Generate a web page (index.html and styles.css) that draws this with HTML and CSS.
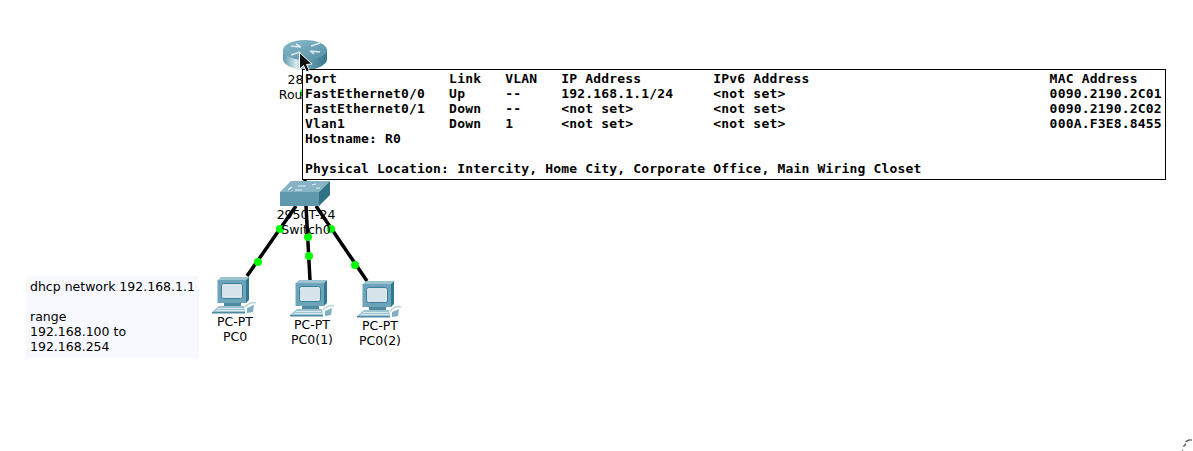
FILE: index.html
```html
<!DOCTYPE html>
<html lang="en">
<head>
<meta charset="utf-8">
<title>Packet Tracer topology</title>
<link rel="stylesheet" href="styles.css">
</head>
<body>
<main class="canvas">
  <svg class="layer" width="1193" height="451" viewBox="0 0 1193 451">
    <defs>
      <linearGradient id="rside" x1="0" x2="1" y1="0" y2="0">
        <stop offset="0" stop-color="#5a99ae"/><stop offset="0.3" stop-color="#d9e9ee"/><stop offset="0.55" stop-color="#6aa0b4"/><stop offset="1" stop-color="#35778f"/>
      </linearGradient>
      <linearGradient id="rtop" x1="0" x2="1" y1="0" y2="1">
        <stop offset="0" stop-color="#8abaca"/><stop offset="1" stop-color="#558fa6"/>
      </linearGradient>
      <g id="pc">
        <path d="M1 3 L4 0 H32 L29 3 Z" fill="#9cc3d0"/>
        <rect x="0.500" y="3" width="28.500" height="23" fill="#6ca5b9"/>
        <path d="M29 3 L32 0 V23 L29 26 Z" fill="#2f7a92"/>
        <rect x="4.500" y="6.500" width="21" height="15" rx="2" fill="#d6e5ec" stroke="#3f7f96"/>
        <path d="M7 26 H24 V29 H7 Z" fill="#4f8aa0"/>
        <path d="M-5 35 L2 29 H27 L28 35 Z" fill="#9cc3d0"/>
        <path d="M-5 35 H28 V36.500 H-5 Z" fill="#4f8aa0"/>
        <path d="M1 31.500 H26 M-1 33.500 H27" stroke="#dbe9ee" fill="none"/>
        <path d="M28 30 C31 26 36 25 39 26" stroke="#b4d1db" stroke-width="1.500" fill="none"/>
        <path d="M30 31 L37 28 L36 35 L30 36 Z" fill="#7fb0c1"/>
      </g>
    </defs>
    <g class="link">
      <line x1="296" y1="206" x2="247" y2="276"/>
      <line x1="306" y1="206" x2="310" y2="280"/>
      <line x1="316" y1="206" x2="367" y2="281"/>
      <line x1="305" y1="65" x2="305" y2="188"/>
    </g>
    <g class="led">
      <circle cx="304" cy="93" r="4"/>
      <circle cx="280" cy="229" r="4"/>
      <circle cx="258" cy="262" r="4"/>
      <circle cx="308" cy="237" r="4"/>
      <circle cx="309" cy="256" r="4"/>
      <circle cx="331" cy="229" r="4"/>
      <circle cx="355" cy="265" r="4"/>
    </g>
    <g>
      <path d="M283 49 V59 C283 65 293 70 305 70 C317 70 327 65 327 59 V49 Z" fill="url(#rside)"/>
      <ellipse cx="305" cy="50" rx="22" ry="10" fill="url(#rtop)"/>
      <path d="M291 46 L300 47 M310 51 L320 52 M300 52 L291 55 M311 46 L320 43 M296 44 L301 47 M314 54 L310 51" stroke="#d8e8ee" stroke-width="1.500" fill="none"/>
    </g>
    <g>
      <path d="M280 192 L291 181 H330 L319 192 Z" fill="#86b4c4"/>
      <path d="M319 192 L330 181 V195 L319 206 Z" fill="#2f7186"/>
      <rect x="280" y="192" width="39" height="14" fill="#5f98ad"/>
      <path d="M288 190 L292 187 M298 186 H306 M312 185 L316 184 M316 188 H320 M295 190 H302" stroke="#e4f0f4" stroke-width="1.200" fill="none"/>
    </g>
    <use href="#pc" x="217" y="277"/>
    <use href="#pc" x="295" y="280"/>
    <use href="#pc" x="362" y="281"/>
    <path class="resize" d="M1182 450 h1 M1183 446 h2 v-2 h1 M1186 442 v-1 h2 v-1 h4"/>
  </svg>

  <div class="label router-label"><span>2811</span><span>Router0</span></div>
  <div class="label switch-label"><span>2950T-24</span><span>Switch0</span></div>
  <div class="label pc-a"><span>PC-PT</span><span>PC0</span></div>
  <div class="label pc-b"><span>PC-PT</span><span>PC0(1)</span></div>
  <div class="label pc-c"><span>PC-PT</span><span>PC0(2)</span></div>

  <div class="note">dhcp network 192.168.1.1

range
192.168.100 to
192.168.254</div>

  <pre class="tip">Port              Link   VLAN   IP Address         IPv6 Address                              MAC Address
FastEthernet0/0   Up     --     192.168.1.1/24     &lt;not set&gt;                                 0090.2190.2C01
FastEthernet0/1   Down   --     &lt;not set&gt;          &lt;not set&gt;                                 0090.2190.2C02
Vlan1             Down   1      &lt;not set&gt;          &lt;not set&gt;                                 000A.F3E8.8455
Hostname: R0

Physical Location: Intercity, Home City, Corporate Office, Main Wiring Closet</pre>

  <svg class="layer" width="1193" height="451" viewBox="0 0 1193 451">
    <path class="cursor" d="M299.500 52.500 V69 L303.500 65.500 L306.500 72 L309.500 70.500 L306.500 64.500 L312 64 Z"/>
  </svg>
</main>
</body>
</html>
```
FILE: styles.css
```css
* { box-sizing: border-box; }
html, body { margin: 0; background: #fff; }
.canvas {
  position: relative;
  width: 1193px;
  height: 451px;
  overflow: hidden;
  font-family: "DejaVu Sans", sans-serif;
  color: #000;
}
.layer { position: absolute; left: 0; top: 0; display: block; }
.link line { stroke: #000; stroke-width: 3.5; }
.led circle { fill: #0f0; }
.cursor { fill: #111; stroke: #fff; stroke-width: 1; }
.resize { fill: none; stroke: #333; stroke-width: 1; }
.label {
  position: absolute;
  display: flex;
  flex-direction: column;
  align-items: center;
  font-size: 12.5px;
  line-height: 15px;
  white-space: nowrap;
  transform: translateX(-50%);
}
.router-label { left: 303.5px; top: 72px; }
.switch-label { left: 306px; top: 207px; }
.pc-a { left: 235px; top: 314px; }
.pc-b { left: 312px; top: 317px; }
.pc-c { left: 380px; top: 318px; }
.note {
  position: absolute;
  left: 26px;
  top: 276px;
  width: 173px;
  height: 82px;
  padding: 3px 4px;
  background: #f8f8ff;
  font-size: 12.5px;
  line-height: 15px;
  white-space: pre;
}
.tip {
  position: absolute;
  left: 302px;
  top: 69px;
  width: 864px;
  height: 111px;
  margin: 0;
  padding: 1px 2px;
  background: #fff;
  border: 1px solid #000;
  font-family: "DejaVu Sans Mono", monospace;
  font-weight: 700;
  font-size: 13px;
  letter-spacing: 0.18px;
  line-height: 15px;
}
```
